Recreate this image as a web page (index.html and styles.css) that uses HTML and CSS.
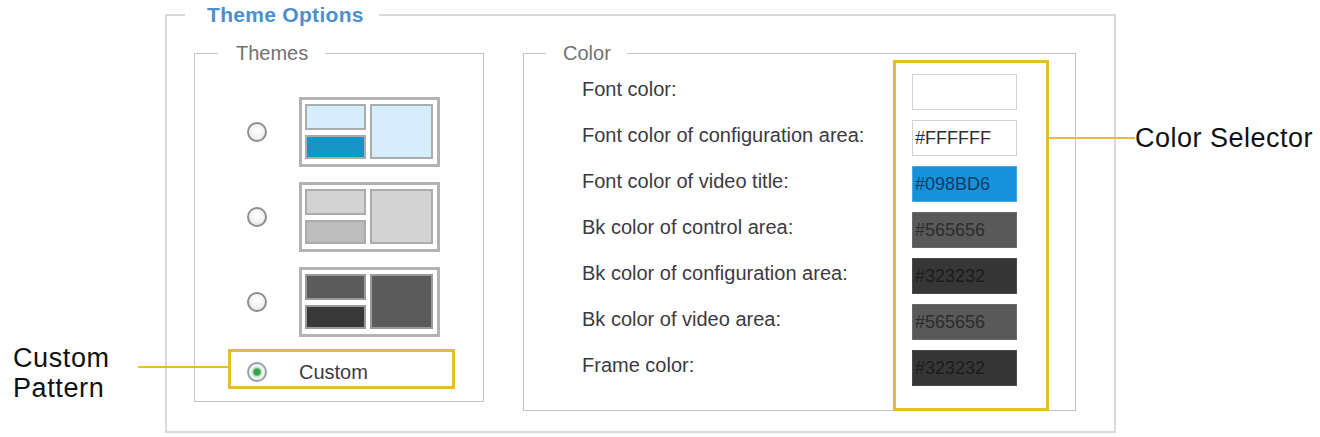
FILE: index.html
```html
<!DOCTYPE html>
<html lang="en">
<head>
<meta charset="utf-8">
<title>Theme Options</title>
<link rel="stylesheet" href="styles.css">
</head>
<body>
<div class="stage">
  <fieldset class="outer">
    <legend class="outer-legend">Theme Options</legend>
    <div class="outer-body">
      <fieldset class="themes">
        <legend class="sub-legend themes-legend">Themes</legend>
        <div class="themes-body">
          <div class="theme-row">
            <span class="radio"></span>
            <div class="thumb t1">
              <span class="pane a"></span><span class="pane c"></span><span class="pane b"></span>
            </div>
          </div>
          <div class="theme-row">
            <span class="radio"></span>
            <div class="thumb t2">
              <span class="pane a"></span><span class="pane c"></span><span class="pane b"></span>
            </div>
          </div>
          <div class="theme-row">
            <span class="radio"></span>
            <div class="thumb t3">
              <span class="pane a"></span><span class="pane c"></span><span class="pane b"></span>
            </div>
          </div>
          <div class="custom-row">
            <span class="radio checked"></span>
            <span class="custom-label">Custom</span>
          </div>
        </div>
      </fieldset>
      <fieldset class="color">
        <legend class="sub-legend color-legend">Color</legend>
        <div class="color-body">
          <div class="labels">
            <div class="label">Font color:</div>
            <div class="label">Font color of configuration area:</div>
            <div class="label">Font color of video title:</div>
            <div class="label">Bk color of control area:</div>
            <div class="label">Bk color of configuration area:</div>
            <div class="label">Bk color of video area:</div>
            <div class="label">Frame color:</div>
          </div>
          <div class="selector">
            <input class="swatch" type="text" value="" readonly>
            <input class="swatch" type="text" value="#FFFFFF" readonly>
            <input class="swatch blue" type="text" value="#098BD6" readonly>
            <input class="swatch gray" type="text" value="#565656" readonly>
            <input class="swatch dark" type="text" value="#323232" readonly>
            <input class="swatch gray" type="text" value="#565656" readonly>
            <input class="swatch dark" type="text" value="#323232" readonly>
          </div>
        </div>
      </fieldset>
    </div>
  </fieldset>

  <div class="callout callout-custom">Custom<br>Pattern</div>
  <div class="leader leader-custom"></div>
  <div class="callout callout-selector">Color Selector</div>
  <div class="leader leader-selector"></div>
</div>
</body>
</html>
```

FILE: styles.css
```css
html, body {
  margin: 0;
  padding: 0;
  background: #ffffff;
}

body {
  font-family: "Liberation Sans", Arial, sans-serif;
  width: 1320px;
  height: 437px;
  overflow: hidden;
}

.stage {
  position: relative;
  width: 1320px;
  height: 437px;
  padding-top: 3px;
  box-sizing: border-box;
}

fieldset {
  margin: 0;
  padding: 0;
  min-inline-size: 0;
  box-sizing: border-box;
}

/* ---------- outer box ---------- */
.outer {
  margin-left: 165px;
  width: 951px;
  border: 2px solid #dadada;
}

.outer-legend {
  margin-left: 18px;
  padding: 0 15px 0 22px;
  font-size: 21px;
  font-weight: bold;
  line-height: 24px;
  letter-spacing: 0.3px;
  color: #4d8fcd;
}

.outer-body {
  display: flex;
  align-items: flex-start;
  padding: 14px 0 20px 27px;
  gap: 39px;
}

.sub-legend {
  padding: 0 17px;
  font-size: 20px;
  line-height: 24px;
  color: #727272;
}

/* ---------- themes ---------- */
.themes {
  width: 290px;
  border: 1px solid #c4c4c4;
}

.themes-legend {
  margin-left: 23px;
  padding: 0 17px 0 18px;
}

.themes-body {
  display: flex;
  flex-direction: column;
  gap: 15px;
  padding: 32px 0 12px 52px;
}

.theme-row {
  display: flex;
  align-items: center;
  gap: 32px;
  height: 70px;
}

.radio {
  flex: none;
  width: 20px;
  height: 20px;
  border-radius: 50%;
  box-sizing: border-box;
  border: 2px solid #8e8e8e;
  background: radial-gradient(circle at 50% 40%, #ffffff 0, #f2f2f2 55%, #dcdcdc 100%);
}

.radio.checked {
  border-color: #93a3ab;
  background: radial-gradient(circle, #2f9e48 0, #3aa652 3px, #bfe5c6 4.5px, #eef6ef 6px, #f4f4f4 8px);
}

.thumb {
  display: grid;
  grid-template-columns: 61px 63px;
  grid-template-rows: 26px 24px;
  gap: 5px 4px;
  padding: 4px 4px 5px 3px;
  border: 3px solid #b3b3b3;
  background: #ffffff;
}

.pane {
  border: 2px solid #acacac;
  box-sizing: border-box;
}

.pane.c {
  grid-column: 2;
  grid-row: 1 / 3;
}

.pane.a { grid-column: 1; grid-row: 1; }
.pane.b { grid-column: 1; grid-row: 2; }

.t1 .a, .t1 .c { background: #d5edfd; }
.t1 .b { background: #1496c4; }

.t2 .a, .t2 .c { background: #d3d3d3; }
.t2 .b { background: #bdbdbd; }

.t3 .pane { border-color: #9a9a9a; }
.t3 .a, .t3 .c { background: #5b5b5b; }
.t3 .b { background: #383838; }

.custom-row {
  display: flex;
  align-items: center;
  gap: 32px;
  margin: -3px 0 0 -19px;
  width: 227px;
  height: 40px;
  box-sizing: border-box;
  border: 3px solid #e6bd2e;
  padding: 6px 0 0 16px;
}

.custom-label {
  font-size: 20px;
  color: #3d3a42;
}

/* ---------- color ---------- */
.color {
  width: 553px;
  border: 1px solid #c4c4c4;
}

.color-legend {
  margin-left: 22px;
  padding: 0 16px 0 17px;
}

.color-body {
  display: flex;
  align-items: flex-start;
  padding-left: 58px;
  margin-top: -5px;
  margin-bottom: -1px;
}

.labels {
  width: 311px;
  padding-top: 11px;
  display: flex;
  flex-direction: column;
  gap: 10px;
}

.label {
  height: 36px;
  line-height: 36px;
  font-size: 20px;
  color: #3d3a42;
  white-space: nowrap;
}

.selector {
  display: flex;
  flex-direction: column;
  gap: 10px;
  width: 156px;
  box-sizing: border-box;
  border: 3px solid #e6bd2e;
  padding: 11px 0 22px 16px;
}

.swatch {
  display: block;
  width: 105px;
  height: 36px;
  margin: 0;
  box-sizing: border-box;
  border: 1px solid #d2d2d2;
  padding: 0 2px;
  font-family: "Liberation Sans", Arial, sans-serif;
  font-size: 18px;
  color: #2e2e2e;
  background: #ffffff;
  outline: none;
}

.swatch.blue {
  background: #1592da;
  border-color: #4aa8e0;
  color: #123c6a;
}

.swatch.gray {
  background: #595959;
  border-color: #6a6a6a;
  color: #2c2c2c;
}

.swatch.dark {
  background: #363636;
  border-color: #4a4a4a;
  color: #1c1c1c;
}

/* ---------- callouts ---------- */
.callout {
  position: absolute;
  font-size: 27px;
  line-height: 30px;
  letter-spacing: 0.6px;
  color: #111111;
}

.callout-custom {
  left: 13px;
  top: 343px;
}

.callout-selector {
  left: 1135px;
  top: 123px;
  letter-spacing: 0.5px;
  white-space: nowrap;
}

.leader {
  position: absolute;
  height: 2px;
  background: #e6bd2e;
}

.leader-custom {
  left: 138px;
  top: 366px;
  width: 90px;
}

.leader-selector {
  left: 1049px;
  top: 137px;
  width: 86px;
}
```
